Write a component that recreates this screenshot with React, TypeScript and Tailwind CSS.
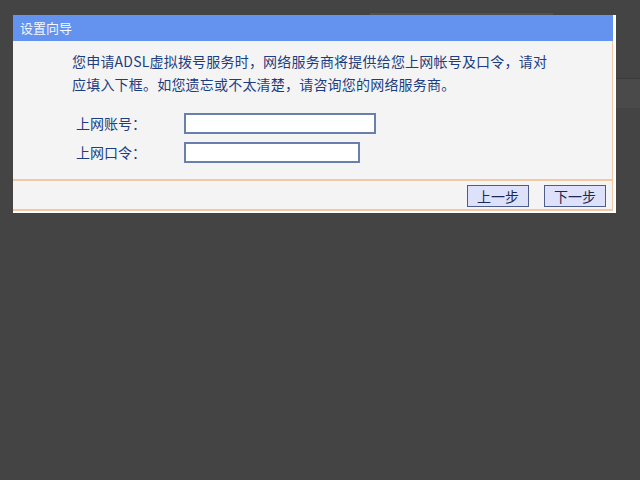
const Field = ({ label, width }: { label: string; width: string }) => (
  <div className="flex items-center">
    <span className="w-[108px]">{label}</span>
    <input
      type="text"
      className={`h-[21px] ${width} border-2 border-[#6b7fae] bg-white outline-none`}
    />
  </div>
);

const StepButton = ({ children }: { children: React.ReactNode }) => (
  <button className="h-[22px] w-[62px] border border-[#4c5d8c] bg-[#dde2fa] text-[14px] leading-none text-[#1c2a52]">
    {children}
  </button>
);

export default function App() {
  return (
    <div className="relative h-[480px] w-[640px] overflow-hidden bg-[#444444] font-['Noto_Sans_CJK_SC',sans-serif]">
      {/* dimmed page behind the wizard */}
      <div className="ml-[370px] mt-[13px] h-[2px] w-[183px] bg-[#515151]" />
      <div className="ml-auto mt-[63px] h-[30px] w-[24px] border-t border-[#3b3b3b] bg-[#4a4a4a]" />

      <div className="absolute left-[13px] top-[15px] flex w-[603px] flex-col bg-white pb-[2px] pr-[3px]">
        <div className="flex h-[26px] items-center bg-[#6393ef] pl-[7px] text-[13px] text-[#f4f7ff]">
          设置向导
        </div>
        <div className="border-b-2 border-r border-b-[#f3c9a4] border-r-[#f3c9a4] bg-[#f4f4f4] text-[14px] text-[#1d3d82]">
          <div className="h-[138px] pt-[9px]">
            <p className="pl-[59px] leading-[23px] tracking-[0.2px]">
              您申请ADSL虚拟拨号服务时，网络服务商将提供给您上网帐号及口令，请对
              <br />
              应填入下框。如您遗忘或不太清楚，请咨询您的网络服务商。
            </p>
            <div className="mt-[17px] flex flex-col gap-[8px] pl-[63px]">
              <Field label="上网账号：" width="w-[192px]" />
              <Field label="上网口令：" width="w-[176px]" />
            </div>
          </div>
          <div className="h-[2px] bg-[#f3c9a4]" />
          <div className="flex h-[28px] items-start justify-end gap-[15px] pr-[6px] pt-[4px]">
            <StepButton>上一步</StepButton>
            <StepButton>下一步</StepButton>
          </div>
        </div>
      </div>
    </div>
  );
}
